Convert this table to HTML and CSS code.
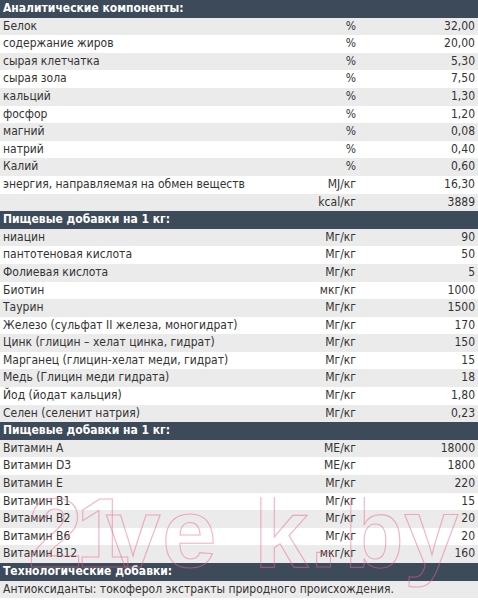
FILE: index.html
```html
<!DOCTYPE html>
<html lang="ru">
<head>
<meta charset="utf-8">
<link rel="stylesheet" href="styles.css">
</head>
<body>
<div class="sheet">
  <div class="head">Аналитические компоненты:</div>
  <div class="row g"><span>Белок</span><span class="u">%</span><span class="v">32,00</span></div>
  <div class="row"><span>содержание жиров</span><span class="u">%</span><span class="v">20,00</span></div>
  <div class="row g"><span>сырая клетчатка</span><span class="u">%</span><span class="v">5,30</span></div>
  <div class="row"><span>сырая зола</span><span class="u">%</span><span class="v">7,50</span></div>
  <div class="row g"><span>кальций</span><span class="u">%</span><span class="v">1,30</span></div>
  <div class="row"><span>фосфор</span><span class="u">%</span><span class="v">1,20</span></div>
  <div class="row g"><span>магний</span><span class="u">%</span><span class="v">0,08</span></div>
  <div class="row"><span>натрий</span><span class="u">%</span><span class="v">0,40</span></div>
  <div class="row g"><span>Калий</span><span class="u">%</span><span class="v">0,60</span></div>
  <div class="row"><span>энергия, направляемая на обмен веществ</span><span class="u">MJ/кг</span><span class="v">16,30</span></div>
  <div class="row g"><span></span><span class="u">kcal/кг</span><span class="v">3889</span></div>

  <div class="head">Пищевые добавки на 1 кг:</div>
  <div class="row g"><span>ниацин</span><span class="u">Мг/кг</span><span class="v">90</span></div>
  <div class="row"><span>пантотеновая кислота</span><span class="u">Мг/кг</span><span class="v">50</span></div>
  <div class="row g"><span>Фолиевая кислота</span><span class="u">Мг/кг</span><span class="v">5</span></div>
  <div class="row"><span>Биотин</span><span class="u">мкг/кг</span><span class="v">1000</span></div>
  <div class="row g"><span>Таурин</span><span class="u">Мг/кг</span><span class="v">1500</span></div>
  <div class="row"><span>Железо (сульфат II железа, моногидрат)</span><span class="u">Мг/кг</span><span class="v">170</span></div>
  <div class="row g"><span>Цинк (глицин – хелат цинка, гидрат)</span><span class="u">Мг/кг</span><span class="v">150</span></div>
  <div class="row"><span>Марганец (глицин-хелат меди, гидрат)</span><span class="u">Мг/кг</span><span class="v">15</span></div>
  <div class="row g"><span>Медь (Глицин меди гидрата)</span><span class="u">Мг/кг</span><span class="v">18</span></div>
  <div class="row"><span>Йод (йодат кальция)</span><span class="u">Мг/кг</span><span class="v">1,80</span></div>
  <div class="row g"><span>Селен (селенит натрия)</span><span class="u">Мг/кг</span><span class="v">0,23</span></div>

  <div class="head">Пищевые добавки на 1 кг:</div>
  <div class="row g"><span>Витамин A</span><span class="u">МЕ/кг</span><span class="v">18000</span></div>
  <div class="row"><span>Витамин D3</span><span class="u">МЕ/кг</span><span class="v">1800</span></div>
  <div class="row g"><span>Витамин E</span><span class="u">Мг/кг</span><span class="v">220</span></div>
  <div class="row"><span>Витамин B1</span><span class="u">Мг/кг</span><span class="v">15</span></div>
  <div class="row g"><span>Витамин B2</span><span class="u">Мг/кг</span><span class="v">20</span></div>
  <div class="row"><span>Витамин B6</span><span class="u">Мг/кг</span><span class="v">20</span></div>
  <div class="row g"><span>Витамин B12</span><span class="u">мкг/кг</span><span class="v">160</span></div>

  <div class="head">Технологические добавки:</div>
  <div class="row g"><span class="full">Антиоксиданты: токоферол экстракты природного происхождения.</span></div>

  <svg class="mark" width="478" height="110" viewBox="0 0 478 110" aria-hidden="true">
    <text x="28 76 106 162 254 310 344 404" y="70">21vek.by</text>
  </svg>
</div>
</body>
</html>
```
FILE: styles.css
```css
html, body {
  margin: 0;
  padding: 0;
  background: #ffffff;
}
.sheet {
  position: relative;
  width: 478px;
  font-family: "DejaVu Sans Condensed", "DejaVu Sans", Verdana, sans-serif;
  font-stretch: condensed;
  font-size: 12px;
  color: #333333;
  overflow: hidden;
}
.head {
  height: 17.6px;
  line-height: 17.6px;
  background: #3c4a5a;
  color: #ffffff;
  font-weight: bold;
  padding-left: 3px;
  white-space: nowrap;
}
.row {
  display: grid;
  grid-template-columns: 1fr 100px 122px;
  height: 17.6px;
  line-height: 17.6px;
  background: #ffffff;
  white-space: nowrap;
}
.row.g {
  background: #ebebeb;
}
.row > span:first-child {
  padding-left: 3px;
}
.u {
  text-align: right;
}
.v {
  text-align: right;
  padding-right: 3px;
}
.full {
  grid-column: 1 / 4;
}
.mark {
  position: absolute;
  left: 0;
  top: 497px;
  pointer-events: none;
}
.mark text {
  font-family: "Liberation Sans", Arial, sans-serif;
  font-weight: bold;
  font-size: 98px;
  fill: none;
  stroke: rgba(240, 100, 140, 0.5);
  stroke-width: 1.1;
}
```
